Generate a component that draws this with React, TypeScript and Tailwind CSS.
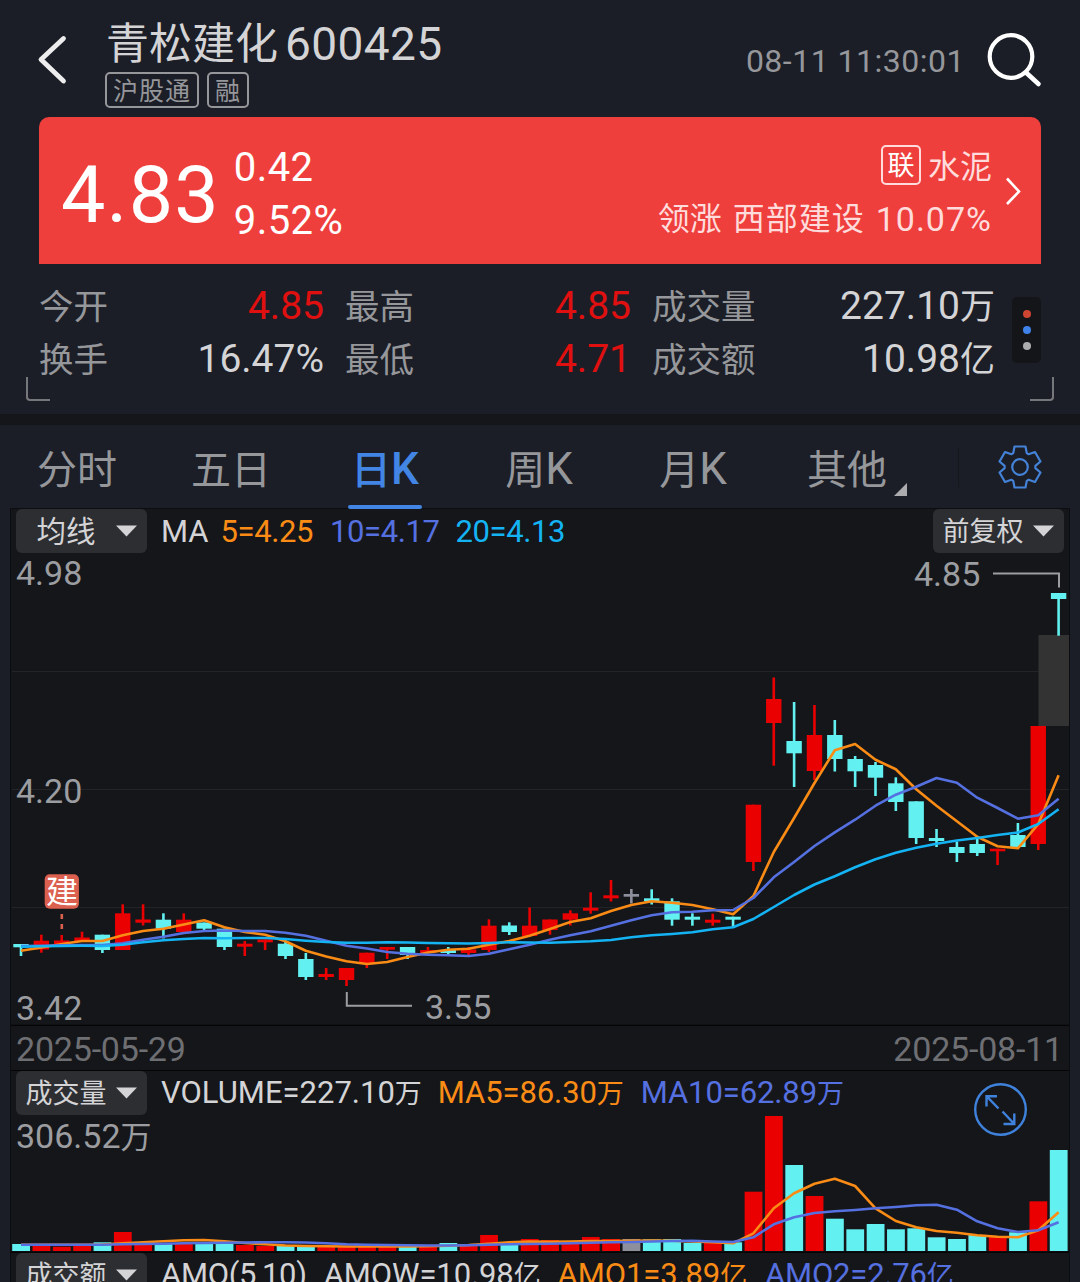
const UP = "#ea0000"
const DOWN = "#62f0f0"
const FLAT = "#8d8f9c"
const ORANGE = "#fa8c16"
const INDIGO = "#5570e0"
const SKY = "#14b4f4"

const STEP = 20.345
const FIRST = 21

// color, high, body top, body bottom, low
type Candle = [string, number, number, number, number]

const candles: Candle[] = [
  [DOWN, 944, 944, 947.3, 956],
  [UP, 934.7, 940.7, 949.5, 952.7],
  [UP, 935, 940.5, 944, 944],
  [UP, 931.7, 937.5, 941, 941],
  [DOWN, 934.7, 934.7, 950, 953],
  [UP, 904.3, 913.3, 950, 950],
  [UP, 904.3, 919.5, 922.7, 925.5],
  [DOWN, 913.3, 919.7, 928.7, 938.5],
  [UP, 913.3, 919.7, 932, 932],
  [DOWN, 922.5, 922.5, 928.7, 930],
  [DOWN, 928.7, 928.7, 947, 950],
  [UP, 941, 943.7, 946.7, 956],
  [UP, 939.5, 939.5, 942.3, 950],
  [DOWN, 941, 943.7, 956, 959],
  [DOWN, 953, 959, 977, 980],
  [UP, 968, 974, 977, 980],
  [UP, 968, 968, 980, 986],
  [UP, 952.7, 952.7, 964, 968],
  [UP, 947, 947, 949.7, 959],
  [DOWN, 947, 947, 955, 959],
  [UP, 947, 950, 953, 953],
  [DOWN, 947, 950, 953, 954.7],
  [UP, 947, 949.5, 953, 956],
  [UP, 919.3, 925.7, 950, 952],
  [DOWN, 922.3, 925.5, 932, 935],
  [UP, 907.5, 925.7, 936, 936],
  [UP, 919.5, 919.5, 930, 934.7],
  [UP, 910.3, 913.3, 919.7, 925.5],
  [UP, 892.3, 907.7, 910.7, 913.7],
  [UP, 880, 895.3, 898.3, 901.5],
  [FLAT, 889, 894, 896.7, 903.5],
  [DOWN, 889.3, 898.3, 901.3, 904.5],
  [DOWN, 898.3, 901.3, 919.7, 925.7],
  [DOWN, 913.3, 916.7, 919.7, 925.7],
  [UP, 913.7, 919.7, 922.7, 925.7],
  [DOWN, 916.7, 916.7, 919.7, 927.5],
  [UP, 804.7, 804.7, 862, 871],
  [UP, 677.5, 699, 723, 765.7],
  [DOWN, 702, 741, 753.3, 787],
  [UP, 705, 735, 771, 780],
  [DOWN, 720, 735, 759, 771.5],
  [DOWN, 756, 759, 771.3, 787],
  [DOWN, 762, 765, 777.7, 796],
  [DOWN, 777.3, 783.3, 802, 811],
  [DOWN, 801.3, 801.3, 838, 844],
  [DOWN, 829, 838, 841, 847],
  [DOWN, 841.5, 847, 853, 862],
  [DOWN, 838.5, 844, 853, 856],
  [UP, 848.7, 848.7, 851.3, 865],
  [DOWN, 823, 835, 847, 847],
  [UP, 726, 726, 844, 850],
  [DOWN, 593, 593, 599, 635.7],
]

const ma5 = [
  950.7, 947.5, 944, 941, 941, 935.3, 931, 928.7, 924.5, 920.3, 927.3, 932, 934.7,
  941.3, 950.7, 956.5, 961.3, 964, 962, 957, 952.5, 949.7, 948.7, 944.7, 941, 935.7,
  929, 922, 918.3, 911, 905, 901.3, 902.7, 905, 909.3, 914.3, 896, 852, 818, 783,
  750.3, 744, 759.7, 769.3, 789.3, 805.7, 821.3, 836.7, 846.3, 848.3, 824, 775.3,
]
const ma10 = [
  946, 945.7, 945.3, 945, 945, 943.3, 939.7, 936.7, 933, 931, 930.5, 931, 931, 932.7,
  935.7, 940.7, 945.7, 948.5, 952, 953.7, 954.7, 955.3, 956, 953.7, 949.3, 944.7,
  939.7, 935.3, 931.3, 925.7, 920.3, 915.3, 912.3, 911.7, 910.3, 910, 898, 877.3,
  862, 846, 832.3, 819.7, 805.7, 794.7, 786.7, 778, 782.7, 797.7, 808, 818.7, 815.3,
  798.7,
]
const ma20 = [
  946.7, 946.3, 946, 945.8, 946, 944.7, 942.3, 940.3, 939, 938, 938.3, 938, 938, 939,
  940.7, 942, 942.7, 942.7, 942.3, 942.5, 943, 943.3, 943.5, 943, 942.3, 942.5, 942.7,
  942, 941.3, 940, 937.3, 935.3, 934, 932.3, 929.3, 927.3, 919, 907, 895, 884.5,
  876.2, 867.3, 859.3, 852.7, 847.8, 843.7, 840.5, 838, 835, 832.5, 824, 809.3,
]

const volumeTops = [
  1244, 1246, 1246.7, 1246, 1242.3, 1232, 1243, 1244, 1244, 1244, 1243.5, 1245, 1246,
  1246, 1246, 1246.5, 1247, 1246, 1244, 1247, 1245, 1243, 1246, 1235, 1244, 1239,
  1240, 1241.5, 1237, 1239, 1239, 1239.3, 1239, 1243, 1243, 1242.3, 1191.7, 1116,
  1165, 1196, 1218.7, 1229.3, 1224, 1229.3, 1228.3, 1237.3, 1239, 1235, 1237, 1232.3,
  1201.3, 1150,
]
const vol5 = [
  1244.7, 1244.7, 1244.7, 1244.7, 1244.5, 1243.3, 1242.3, 1241.3, 1240.3, 1240, 1241.3,
  1243, 1244.3, 1245.5, 1246, 1246.3, 1246.5, 1246.5, 1246.5, 1246.5, 1246.3, 1245.7,
  1245, 1243.7, 1242.3, 1241.5, 1241.7, 1241.5, 1241, 1241, 1240.7, 1240.5, 1240.7,
  1241.5, 1242.3, 1243.3, 1233.3, 1208.3, 1193.3, 1183.7, 1178.7, 1186, 1208.3, 1221,
  1227.3, 1231, 1232.7, 1235.3, 1236.7, 1237.3, 1230.3, 1212.3,
]
const vol10 = [
  1244.7, 1244.7, 1244.7, 1244.7, 1244.7, 1244.3, 1244, 1243.7, 1243.3, 1243, 1242.7,
  1242.5, 1242.3, 1242.3, 1242.5, 1243.3, 1244.3, 1244.7, 1245, 1245.3, 1245.5, 1245.5,
  1245.3, 1244.7, 1244.3, 1244, 1243.7, 1243.3, 1242.7, 1242.3, 1242, 1241.5, 1241,
  1240.7, 1241.5, 1242, 1237.3, 1224.3, 1217.3, 1213, 1211.3, 1210, 1208.3, 1207,
  1205.3, 1204.7, 1209.7, 1221.3, 1228.3, 1232, 1230.3, 1222.3,
]

const x = (i: number) => FIRST + STEP * i
const points = (values: number[]) => values.map((y, i) => `${x(i).toFixed(1)},${y}`).join(" ")

const quotes = [
  [
    { label: "今开", value: "4.85", color: "text-[#e01010]" },
    { label: "换手", value: "16.47%", color: "text-[#d4d4d6]" },
  ],
  [
    { label: "最高", value: "4.85", color: "text-[#e01010]" },
    { label: "最低", value: "4.71", color: "text-[#e01010]" },
  ],
  [
    { label: "成交量", value: "227.10", unit: "万", color: "text-[#d4d4d6]" },
    { label: "成交额", value: "10.98", unit: "亿", color: "text-[#d4d4d6]" },
  ],
]

const tabs = [
  { label: "分时" },
  { label: "五日" },
  { label: "日", suffix: "K", active: true },
  { label: "周", suffix: "K" },
  { label: "月", suffix: "K" },
  { label: "其他", more: true },
]

function Gear() {
  const pts: string[] = []
  for (let k = 0; k < 6; k++) {
    for (const [offset, r] of [[-26, 15.4], [-15, 21.2], [15, 21.2], [26, 15.4]]) {
      const a = ((k * 60 + 30 + offset) * Math.PI) / 180
      pts.push(`${(23 + r * Math.cos(a)).toFixed(2)},${(23 + r * Math.sin(a)).toFixed(2)}`)
    }
  }
  return (
    <svg width="46" height="46" fill="none" stroke="#4482d8" strokeWidth="2.2" strokeLinejoin="round">
      <polygon points={pts.join(" ")} />
      <circle cx="23" cy="23" r="7.8" />
    </svg>
  )
}

function Picker({ label }: { label: string }) {
  return (
    <button className="flex h-11 w-[131px] shrink-0 items-center justify-between rounded-md bg-[#2d2e32] pr-[10px] text-[#d4d4d6]">
      <span
        className={`flex-1 pt-[2px] text-center leading-[40px] ${
          label.length === 2 ? "text-[29.5px]" : "text-[27px]"
        }`}
      >
        {label}
      </span>
      <svg width="21" height="12">
        <path d="M0 0.5H21L10.5 11.5Z" fill="#d4d4d6" />
      </svg>
    </button>
  )
}

function PriceChart() {
  return (
    <svg className="block" width="1058" height="473" viewBox="11 553 1058 473">
      {[671.5, 789.5, 907.5].map((y) => (
        <path key={y} d={`M12 ${y}H1069`} stroke="#232428" />
      ))}
      <path d="M11 1025.5H1069" stroke="#050506" strokeWidth="1.5" />
      <rect x="1038.5" y="635" width="31" height="91" fill="#333333" />

      {candles.map(([color, high, top, bottom, low], i) => (
        <g key={i} fill={color}>
          <rect x={x(i) - 1.3} y={high} width="2.6" height={low - high} />
          <rect x={x(i) - 7.7} y={top} width="15.4" height={bottom - top} />
        </g>
      ))}

      <g fill="none" strokeWidth="2.6" strokeLinejoin="round">
        <polyline points={points(ma5)} stroke={ORANGE} />
        <polyline points={points(ma10)} stroke={INDIGO} />
        <polyline points={points(ma20)} stroke={SKY} />
      </g>

      <g fill="none" stroke="#9c9da0" strokeWidth="2">
        <path d="M993 573.5H1059V587.5" />
        <path d="M346.8 992V1005.7H412" />
      </g>

      {/* 建 marker */}
      <path d="M61.8 914V930" stroke="#d9604c" strokeWidth="2.6" strokeDasharray="5 5" />
      <rect x="44.7" y="874.3" width="34.2" height="34.5" rx="5" fill="#dc604f" />
      <text x="46" y="902.5" fontSize="32" fill="#ffffff">建</text>

      <g fontSize="34" fill="#9c9da0">
        <text x="16" y="585">4.98</text>
        <text x="16" y="803">4.20</text>
        <text x="16" y="1019.5">3.42</text>
        <text x="914" y="586">4.85</text>
        <text x="425" y="1019">3.55</text>
      </g>
    </svg>
  )
}

function VolumeChart() {
  return (
    <svg className="block" width="1058" height="139" viewBox="11 1114 1058 139">
      {volumeTops.map((top, i) => (
        <rect key={i} x={x(i) - 8.8} y={top} width="17.8" height={1251 - top} fill={candles[i][0]} />
      ))}
      <g fill="none" strokeWidth="2.6" strokeLinejoin="round">
        <polyline points={points(vol5)} stroke={ORANGE} />
        <polyline points={points(vol10)} stroke={INDIGO} />
      </g>
      <path d="M11 1252.3H1069" stroke="#050506" strokeWidth="1.5" />
      <text x="16" y="1148" fontSize="34" fill="#9c9da0">
        306.52<tspan fontSize="31">万</tspan>
      </text>
    </svg>
  )
}

export default function App() {
  return (
    <div className="h-[1282px] w-[1080px] overflow-hidden bg-[#1b1e26] font-[Roboto,'Noto_Sans_CJK_SC',sans-serif] whitespace-nowrap">
      {/* HEADER */}
      <header className="flex h-[117px] pl-[36px]">
        <svg className="mt-[34px]" width="34" height="52" fill="none" stroke="#ededee" strokeWidth="4.8" strokeLinecap="round" strokeLinejoin="round">
          <path d="M27.5 4.5L5 25.5L27.5 47" />
        </svg>
        <div className="ml-[35px] flex-1 pt-[16px]">
          <h1 className="flex h-[56px] items-center pl-[1px] leading-[56px] text-[#d4d4d6]">
            <span className="text-[43px]">青松建化</span>
            <span className="pl-[7px] text-[46px] tracking-[0.4px]">600425</span>
          </h1>
          <div className="flex gap-2 text-[25px] leading-[35px] tracking-[1px] text-[#96979b]">
            <span className="h-9 w-[94px] rounded-[5px] border-2 border-[#96979b] pl-[6px]">沪股通</span>
            <span className="h-9 w-[42px] rounded-[5px] border-2 border-[#96979b] pl-[6px]">融</span>
          </div>
        </div>
        <span className="mt-[41px] text-[32px] leading-10 tracking-[0.5px] text-[#96979b]">08-11 11:30:01</span>
        <svg className="mt-[30px] mr-[37px] ml-[18px]" width="60" height="60" fill="none" stroke="#ffffff" strokeLinecap="round">
          <circle cx="28" cy="26.5" r="21.3" strokeWidth="4.2" />
          <path d="M43 42.5L55.5 54" strokeWidth="4.6" />
        </svg>
      </header>

      {/* PRICE */}
      <section className="mx-[39px] flex h-[147px] items-center rounded-t-[10px] bg-[#ee3f3d] text-white">
        <span className="mt-[10px] ml-[22px] text-[79px] leading-none tracking-[1.2px]">4.83</span>
        <div className="mt-[6px] ml-[14px] text-[40px] leading-[53px] tracking-[0.4px]">
          <p>0.42</p>
          <p>9.52%</p>
        </div>
        <div className="mt-[5px] ml-auto text-[#ffdcdb]">
          <div className="flex h-[53px] items-center justify-end gap-[7px]">
            <span className="mb-[4px] h-10 w-10 rounded-[5px] border-2 border-[#ffdcdb] text-center text-[27px] leading-[38px] text-white">联</span>
            <span className="text-[32px]">水泥</span>
          </div>
          <p className="flex h-[53px] items-center gap-[11px] text-[32px] leading-[53px]">
            <span>领涨</span>
            <span className="tracking-[1px]">西部建设</span>
            <span className="text-[34px] tracking-[1px]">10.07%</span>
          </p>
        </div>
        <svg className="mr-[19px] ml-[13px]" width="17" height="30" fill="none" stroke="#ffffff" strokeWidth="2.6">
          <path d="M2 2.5L14 15.5L2 28" />
        </svg>
      </section>

      {/* QUOTES */}
      <section className="relative flex h-[150px] pt-[16px] pl-[39px]">
        <div className="grid grid-cols-[285px_286px_343px] gap-x-[21px]">
          {quotes.map((column, i) => (
            <dl key={i}>
              {column.map((item) => (
                <div key={item.label} className="flex h-[53px] items-center justify-between leading-[53px]">
                  <dt className="pt-[2px] text-[34.5px] text-[#96979b]">{item.label}</dt>
                  <dd className={`text-[39px] ${item.color}`}>
                    {item.value}
                    {item.unit && <span className="text-[35px]">{item.unit}</span>}
                  </dd>
                </div>
              ))}
            </dl>
          ))}
        </div>
        <div className="mt-[17px] ml-[17px] flex h-[66px] w-[29px] flex-col items-center justify-center gap-2 rounded-[5px] bg-[#141519]">
          <i className="size-2 rounded-full bg-[#cc4632]" />
          <i className="size-2 rounded-full bg-[#3f83ea]" />
          <i className="size-2 rounded-full bg-[#acacae]" />
        </div>
        <i className="absolute top-[113px] left-[26px] h-6 w-6 rounded-bl-[4px] border-b-2 border-l-2 border-[#75777b]" />
        <i className="absolute top-[113px] right-[26px] h-6 w-6 rounded-br-[4px] border-r-2 border-b-2 border-[#75777b]" />
      </section>
      <div className="h-[11px] bg-[#15161a]" />

      {/* TABS */}
      <nav className="flex h-[84px]">
        {tabs.map((tab) => (
          <button
            key={tab.label}
            className={`relative flex w-[154px] items-center justify-center pt-[4px] text-[40px] leading-[60px] ${
              tab.active ? "font-medium text-[#4285e4]" : "text-[#96979b]"
            }`}
          >
            <span className="pt-[4px]">{tab.label}</span>
            {tab.suffix && <span className="text-[44px]">{tab.suffix}</span>}
            {tab.active && <i className="absolute bottom-0 left-10 h-1 w-[74px] rounded-sm bg-[#4285e4]" />}
            {tab.more && (
              <svg className="absolute right-[17px] bottom-[13px]" width="13" height="13">
                <path d="M13 0V13H0Z" fill="#acacae" />
              </svg>
            )}
          </button>
        ))}
        <div className="mt-[22px] ml-[34px] h-10 w-px bg-[#15171d]" />
        <button className="mt-[19px] ml-[38px] h-[46px]">
          <Gear />
        </button>
      </nav>

      {/* CHARTS */}
      <main className="mx-[11px] bg-[#15161a] text-[31px] shadow-[0_0_0_1px_#0c0d10]">
        <div className="flex h-11 pr-[5px] pl-[5px] leading-[46px]">
          <Picker label="均线" />
          <span className="ml-[14px] text-[#d4d4d6]">MA</span>
          <span className="ml-[12px] tracking-[-0.4px] text-[#fa8c16]">5=4.25</span>
          <span className="ml-[17px] tracking-[-0.4px] text-[#5570e0]">10=4.17</span>
          <span className="ml-[16px] tracking-[-0.4px] text-[#14b4f4]">20=4.13</span>
          <div className="ml-auto">
            <Picker label="前复权" />
          </div>
        </div>
        <PriceChart />
        <div className="flex h-11 justify-between pr-[6px] pl-[5px] text-[34px] leading-[46px] tracking-[-0.2px] text-[#6e6f73]">
          <span>2025-05-29</span>
          <span>2025-08-11</span>
        </div>
        <div className="relative flex h-11 border-t border-[#050506] pl-[5px] leading-11">
          <Picker label="成交量" />
          <span className="ml-[14px] text-[#d4d4d6]">VOLUME=227.10<span className="text-[27px]">万</span></span>
          <span className="ml-[16px] tracking-[-0.1px] text-[#fa8c16]">MA5=86.30<span className="text-[27px]">万</span></span>
          <span className="ml-[17px] tracking-[-0.1px] text-[#5570e0]">MA10=62.89<span className="text-[27px]">万</span></span>
          <svg className="absolute top-[11px] left-[962px]" width="56" height="56" fill="none" stroke="#3f82dc" strokeWidth="2.4">
            <circle cx="27.5" cy="27.5" r="25.3" />
            <path d="M13.5 24.5V14.2H24M13.5 14.2L25.5 26.5M29.5 29.5L41.3 42M41.3 31.5V42H30.5" />
          </svg>
        </div>
        <VolumeChart />
        <div className="flex h-11 pl-[5px] leading-11">
          <Picker label="成交额" />
          <span className="ml-[14px] tracking-[-0.3px] text-[#d4d4d6]">AMO(5,10)</span>
          <span className="ml-[17px] tracking-[-0.1px] text-[#d4d4d6]">AMOW=10.98<span className="text-[27px]">亿</span></span>
          <span className="ml-[17px] tracking-[-0.1px] text-[#fa8c16]">AMO1=3.89<span className="text-[27px]">亿</span></span>
          <span className="ml-[18px] tracking-[-0.2px] text-[#5570e0]">AMO2=2.76<span className="text-[27px]">亿</span></span>
        </div>
      </main>
    </div>
  )
}
